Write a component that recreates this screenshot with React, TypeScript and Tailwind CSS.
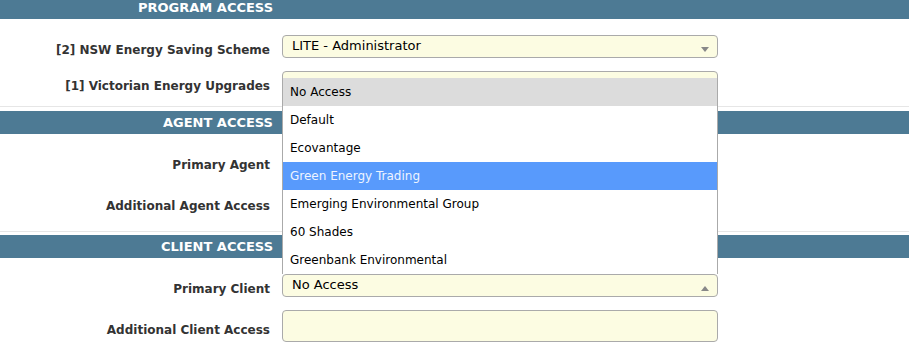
import React from "react";

type Field = {
  label: string;
  value?: string;
  kind: "select" | "multi";
  open?: boolean;
  arrow?: "down" | "up";
};

type Section = { title: string; fields: Field[] };

const sections: Section[] = [
  {
    title: "PROGRAM ACCESS",
    fields: [
      { label: "[2] NSW Energy Saving Scheme", value: "LITE - Administrator", kind: "select", arrow: "down" },
      { label: "[1] Victorian Energy Upgrades", value: "", kind: "select", arrow: "down" },
    ],
  },
  {
    title: "AGENT ACCESS",
    fields: [
      { label: "Primary Agent", value: "", kind: "select", arrow: "down" },
      { label: "Additional Agent Access", kind: "multi" },
    ],
  },
  {
    title: "CLIENT ACCESS",
    fields: [
      { label: "Primary Client", value: "No Access", kind: "select", arrow: "up", open: true },
      { label: "Additional Client Access", kind: "multi" },
    ],
  },
];

const options = [
  "No Access",
  "Default",
  "Ecovantage",
  "Green Energy Trading",
  "Emerging Environmental Group",
  "60 Shades",
  "Greenbank Environmental",
];

function Arrow({ dir }: { dir: "down" | "up" }) {
  return (
    <svg width="8" height="5" viewBox="0 0 8 5" className="absolute right-[8px] bottom-[5px]">
      {dir === "down" ? <polygon points="0,0 8,0 4,5" fill="#888" /> : <polygon points="0,5 8,5 4,0" fill="#888" />}
    </svg>
  );
}

// native listbox opened upwards over the form
function Dropdown() {
  return (
    <div className="absolute bottom-[calc(100%+1px)] -left-px -right-px z-10 border-x border-[#aaa] bg-white">
      {options.map((opt, i) => (
        <div
          key={opt}
          className={
            "h-[28px] flex items-center pl-[7px] text-[12px] " +
            (i === 0 ? "bg-[#dcdcdc] text-black" : i === 3 ? "bg-[#589afc] text-[#eef4ff]" : "text-black")
          }
        >
          {opt}
        </div>
      ))}
    </div>
  );
}

function Row({ field }: { field: Field }) {
  const tall = field.kind === "multi";
  return (
    <div className={"flex items-center " + (tall ? "h-[46px]" : "h-[36px]")}>
      <div className="w-[273px] shrink-0 pr-[3px] pt-[8px] text-right text-[12px] font-bold text-[#333]">
        {field.label}
      </div>
      <div
        className={
          "relative ml-[9px] w-[436px] border border-[#aaa] rounded-[4px] bg-[#fcfce2] pl-[9px] flex items-center text-[13px] text-black " +
          (tall ? "h-[32px]" : "h-[23px]")
        }
      >
        {field.value}
        {field.arrow && <Arrow dir={field.arrow} />}
        {field.open && <Dropdown />}
      </div>
    </div>
  );
}

export default function App() {
  return (
    <div className="w-[909px] h-[354px] overflow-hidden bg-white" style={{ fontFamily: '"DejaVu Sans", sans-serif' }}>
      <div className="-mt-[4px]">
        {sections.map((section, i) => (
          <div key={section.title}>
            <div className="h-[23px] bg-[#4d7a94] flex items-center">
              <div className="w-[273px] text-right text-[13px] font-bold text-white">{section.title}</div>
            </div>
            <div className="pt-[9px] pb-[6px]">
              {section.fields.map((f) => (
                <Row key={f.label} field={f} />
              ))}
            </div>
            {i < sections.length - 1 && (
              <div className={"h-px bg-[#e6e6e6] " + (i === 0 ? "mb-[4px]" : "mb-[3px]")} />
            )}
          </div>
        ))}
      </div>
    </div>
  );
}
